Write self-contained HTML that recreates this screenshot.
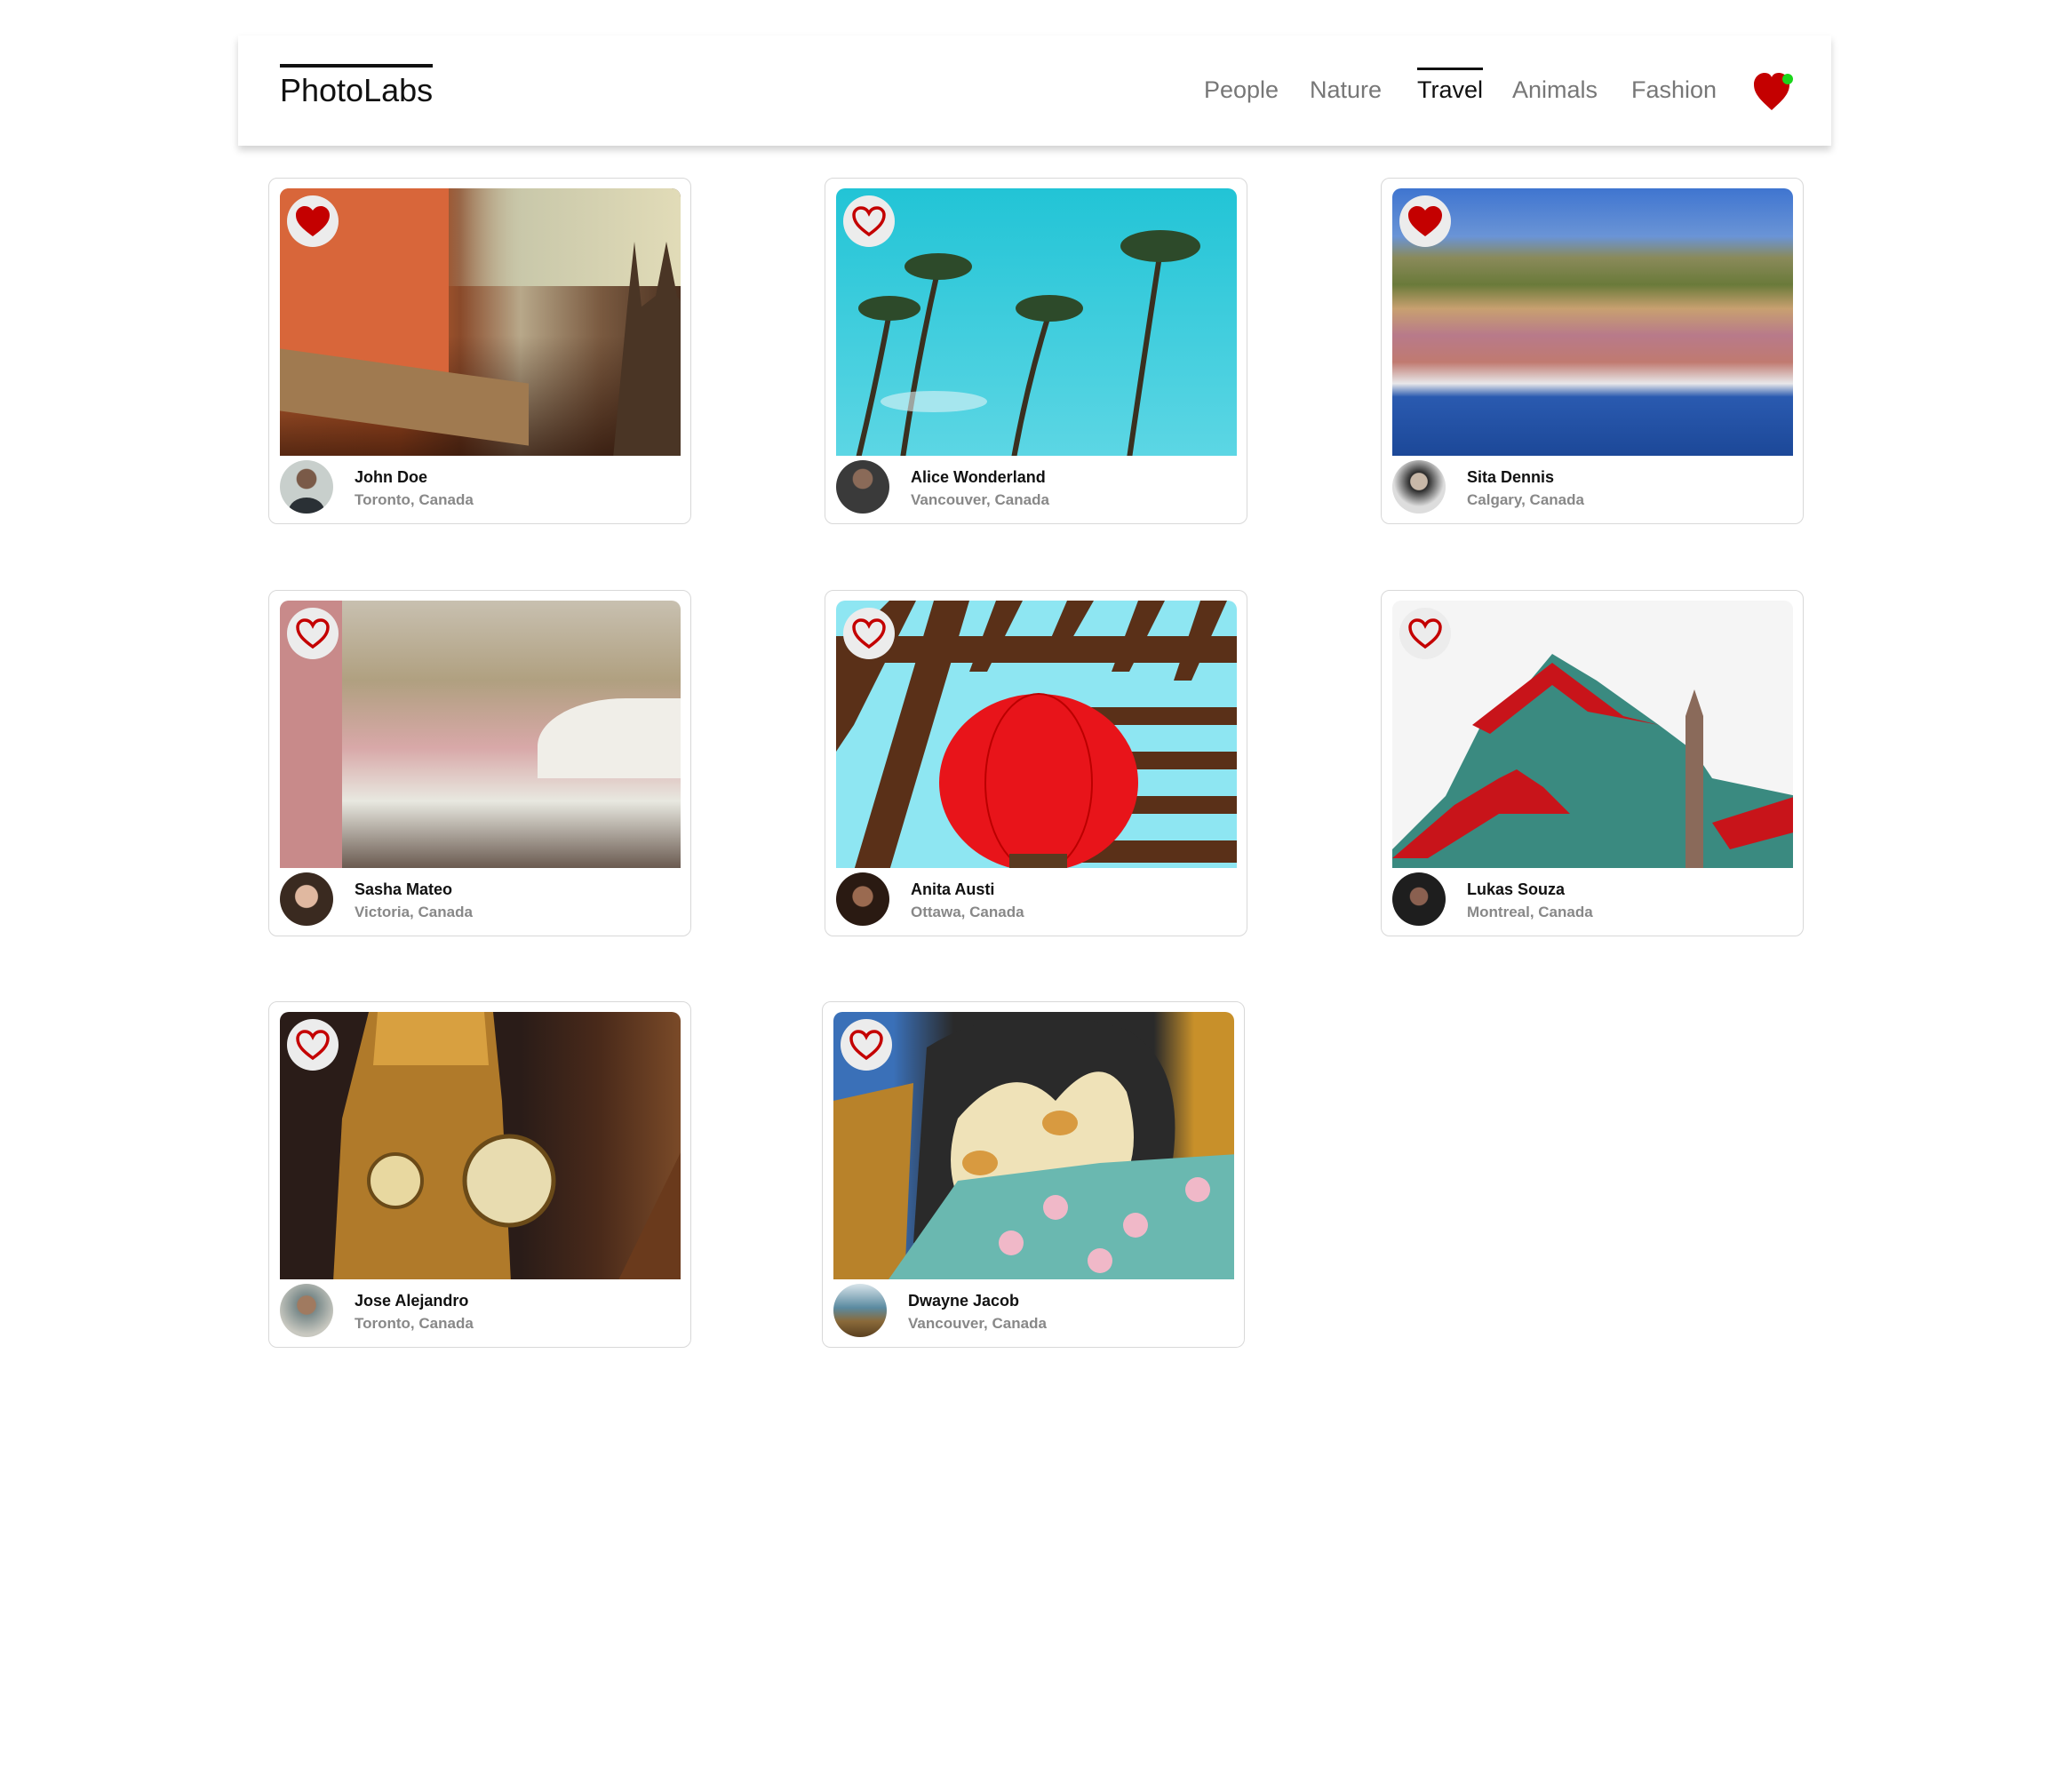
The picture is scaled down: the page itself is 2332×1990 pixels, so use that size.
<!DOCTYPE html>
<html><head><meta charset="utf-8"><style>
*{margin:0;padding:0;box-sizing:border-box}
body{width:2332px;height:1990px;background:#fff;font-family:"Liberation Sans",sans-serif;position:relative;overflow:hidden}
.nav{position:absolute;left:268px;top:40px;width:1793px;height:124px;background:#fff;box-shadow:0 5px 8px rgba(0,0,0,.18)}
.logo{position:absolute;left:47px;top:32px;font-size:36px;color:#111;border-top:4px solid #111;padding-top:6px;line-height:40px}
.nl{position:absolute;top:44px;font-size:27px;color:#777;line-height:34px}
.nl.a{color:#111}
.nl.a:before{content:"";position:absolute;left:0;right:0;top:-8px;border-top:3px solid #111}
.card{position:absolute;width:476px;height:390px;border:1.5px solid #d8d8d8;border-radius:10px;background:#fff}
.img{position:absolute;left:12px;top:11px;width:451px;height:301px;border-radius:10px 10px 0 0;overflow:hidden}
.fav{position:absolute;left:8px;top:8px;width:58px;height:58px;border-radius:50%;background:#ececec;display:flex;align-items:center;justify-content:center}
.av{position:absolute;left:12px;top:317px;width:60px;height:60px;border-radius:50%;overflow:hidden}
.nm{position:absolute;left:96px;top:326px;font-size:18px;font-weight:bold;color:#111}
.lc{position:absolute;left:96px;top:352px;font-size:17px;font-weight:bold;color:#888}
</style></head><body>
<div class="nav">
<div class="logo">PhotoLabs</div>
<div class="nl" style="left:1087px">People</div>
<div class="nl" style="left:1206px">Nature</div>
<div class="nl a" style="left:1327px">Travel</div>
<div class="nl" style="left:1434px">Animals</div>
<div class="nl" style="left:1568px">Fashion</div>
<svg style="position:absolute;left:1704px;top:40px" width="50" height="46" viewBox="0 0 50 46"><path d="M22 44C10 33 2 26 2 15 2 7 8 2 14 2c4 0 7 2 8 5 1-3 4-5 8-5 6 0 12 5 12 13 0 11-8 18-20 29z" fill="#c40000"/><circle cx="40" cy="9" r="6" fill="#1bd61b"/></svg>
</div>

<!-- Row1 -->
<div class="card" style="left:302px;top:200px">
<div class="img" style="background:linear-gradient(180deg,rgba(0,0,0,0) 55%,rgba(40,15,5,.75) 100%),linear-gradient(90deg,#e2733a 0%,#d9652e 30%,#8a4a2a 45%,#b8a88a 60%,#7a5a40 80%,#4a3020 100%)">
<div style="position:absolute;left:0;top:0;width:455px;height:110px;background:linear-gradient(90deg,rgba(0,0,0,0) 40%,#c9c8aa 60%,#e2dcb8 100%)"></div>
<div style="position:absolute;left:0;top:0;width:190px;height:240px;background:#d8663a"></div>
<div style="position:absolute;left:0;top:200px;width:280px;height:70px;background:#a07a50;transform:skewY(8deg)"></div>
<div style="position:absolute;left:375px;top:60px;width:80px;height:244px;background:#4a3525;clip-path:polygon(20% 30%,30% 0,40% 30%,60% 25%,75% 0,90% 25%,100% 30%,100% 100%,0 100%)"></div>
<div class="fav"><svg width="42" height="38" viewBox="0 0 42 38"><path d="M21 36C9 27 2 21 2 12 2 6 7 2 12 2c4 0 7 2 9 5 2-3 5-5 9-5 5 0 10 4 10 10 0 9-7 15-19 24z" fill="#c40000"/></svg></div></div>
<div class="av" style="background:radial-gradient(circle at 50% 35%,#7a5a48 0 22%,#c8cfcc 24%);"><div style="position:absolute;left:10px;top:42px;width:40px;height:30px;border-radius:50%;background:#2a3035"></div></div>
<div class="nm">John Doe</div><div class="lc">Toronto, Canada</div></div>

<div class="card" style="left:928px;top:200px">
<div class="img" style="background:linear-gradient(180deg,#22c4d6,#5cd6e4)">
<svg width="455" height="304" style="position:absolute;left:0;top:0"><g stroke="#3a3020" stroke-width="6" fill="none"><path d="M25 304Q45 220 60 140"/><path d="M75 304Q90 200 115 90"/><path d="M200 304Q215 220 240 140"/><path d="M330 304Q345 200 365 70"/></g><g fill="#2d4a2a"><ellipse cx="60" cy="135" rx="35" ry="14"/><ellipse cx="115" cy="88" rx="38" ry="15"/><ellipse cx="240" cy="135" rx="38" ry="15"/><ellipse cx="365" cy="65" rx="45" ry="18"/></g><ellipse cx="110" cy="240" rx="60" ry="12" fill="#e0f4f6" opacity=".6"/></svg>
<div class="fav"><svg width="42" height="38" viewBox="0 0 42 38"><path d="M21 34C10 26 4 20 4 12 4 7 8 4 12 4c4 0 7 2 9 6 2-4 5-6 9-6 4 0 8 3 8 8 0 8-6 14-17 22z" fill="none" stroke="#c40000" stroke-width="3.5"/></svg></div></div>
<div class="av" style="background:radial-gradient(circle at 50% 35%,#8a6a58 0 22%,#3a3a3a 24%)"></div>
<div class="nm">Alice Wonderland</div><div class="lc">Vancouver, Canada</div></div>

<div class="card" style="left:1554px;top:200px">
<div class="img" style="background:linear-gradient(180deg,#3f75d0 0%,#6a94d6 18%,#8a8a5a 26%,#6a7a3a 36%,#c8a070 45%,#b87a8a 55%,#c07a70 65%,#e8e8ea 73%,#2a5ab0 78%,#1c4898 100%)">
<div class="fav"><svg width="42" height="38" viewBox="0 0 42 38"><path d="M21 36C9 27 2 21 2 12 2 6 7 2 12 2c4 0 7 2 9 5 2-3 5-5 9-5 5 0 10 4 10 10 0 9-7 15-19 24z" fill="#c40000"/></svg></div></div>
<div class="av" style="background:radial-gradient(circle at 50% 40%,#c8b8a8 0 20%,#2a2a2a 22%,#ddd 60%)"></div>
<div class="nm">Sita Dennis</div><div class="lc">Calgary, Canada</div></div>

<!-- Row2 -->
<div class="card" style="left:302px;top:664px">
<div class="img" style="background:linear-gradient(180deg,#c8c0b0 0%,#b0a080 30%,#d8a8a8 55%,#e8e8e0 75%,#6a5a50 100%)">
<div style="position:absolute;left:0;top:0;width:70px;height:304px;background:#c88a8a"></div>
<div style="position:absolute;left:290px;top:110px;width:165px;height:90px;background:#f0eee8;border-radius:60% 0 0 0"></div>
<div class="fav"><svg width="42" height="38" viewBox="0 0 42 38"><path d="M21 34C10 26 4 20 4 12 4 7 8 4 12 4c4 0 7 2 9 6 2-4 5-6 9-6 4 0 8 3 8 8 0 8-6 14-17 22z" fill="none" stroke="#c40000" stroke-width="3.5"/></svg></div></div>
<div class="av" style="background:radial-gradient(circle at 50% 45%,#e0b8a0 0 28%,#3a2a20 30%)"></div>
<div class="nm">Sasha Mateo</div><div class="lc">Victoria, Canada</div></div>

<div class="card" style="left:928px;top:664px">
<div class="img" style="background:#8ee6f2">
<svg width="455" height="304" style="position:absolute;left:0;top:0"><g fill="#5a3018"><polygon points="0,60 60,0 90,0 20,140 0,170"/><polygon points="20,304 110,0 150,0 60,304"/><polygon points="180,0 210,0 170,80 150,80"/><polygon points="260,0 290,0 250,70 230,70"/><polygon points="340,0 370,0 330,80 310,80"/><polygon points="410,0 440,0 400,90 380,90"/><rect x="0" y="40" width="455" height="30"/><rect x="200" y="120" width="255" height="20"/><rect x="200" y="170" width="255" height="20"/><rect x="200" y="220" width="255" height="20"/><rect x="200" y="270" width="255" height="25"/></g><ellipse cx="228" cy="205" rx="112" ry="100" fill="#e8141a"/><ellipse cx="228" cy="205" rx="60" ry="100" fill="none" stroke="#b00" stroke-width="2"/><rect x="195" y="285" width="65" height="19" fill="#5a3a20"/></svg>
<div class="fav"><svg width="42" height="38" viewBox="0 0 42 38"><path d="M21 34C10 26 4 20 4 12 4 7 8 4 12 4c4 0 7 2 9 6 2-4 5-6 9-6 4 0 8 3 8 8 0 8-6 14-17 22z" fill="none" stroke="#c40000" stroke-width="3.5"/></svg></div></div>
<div class="av" style="background:radial-gradient(circle at 50% 45%,#9a6a50 0 25%,#2a1a12 27%)"></div>
<div class="nm">Anita Austi</div><div class="lc">Ottawa, Canada</div></div>

<div class="card" style="left:1554px;top:664px">
<div class="img" style="background:#f5f5f5">
<svg width="455" height="304" style="position:absolute;left:0;top:0"><polygon points="0,280 60,220 100,140 130,120 180,60 230,90 300,140 340,170 360,200 455,220 455,304 0,304" fill="#3a8a80"/><polygon points="90,140 180,70 260,130 300,140 220,125 180,95 110,150" fill="#c8141a"/><polygon points="0,290 70,230 120,200 140,190 170,210 200,240 120,240 40,290" fill="#c8141a"/><polygon points="330,130 340,100 350,130 350,304 330,304" fill="#8a6a5a"/><polygon points="360,250 455,220 455,260 380,280" fill="#c8141a"/></svg>
<div class="fav"><svg width="42" height="38" viewBox="0 0 42 38"><path d="M21 34C10 26 4 20 4 12 4 7 8 4 12 4c4 0 7 2 9 6 2-4 5-6 9-6 4 0 8 3 8 8 0 8-6 14-17 22z" fill="none" stroke="#c40000" stroke-width="3.5"/></svg></div></div>
<div class="av" style="background:radial-gradient(circle at 50% 45%,#8a6050 0 22%,#1e1e1e 24%)"></div>
<div class="nm">Lukas Souza</div><div class="lc">Montreal, Canada</div></div>

<!-- Row3 -->
<div class="card" style="left:302px;top:1127px">
<div class="img" style="background:linear-gradient(90deg,#2a1c18 0%,#2a1c18 60%,#4a2a1a 80%,#7a4a28 100%)">
<svg width="455" height="304" style="position:absolute;left:0;top:0"><polygon points="100,0 240,0 250,100 260,304 60,304 70,120" fill="#b07a2a"/><polygon points="110,0 230,0 235,60 105,60" fill="#d8a040"/><circle cx="130" cy="190" r="30" fill="#e8d8a0" stroke="#6a4a18" stroke-width="4"/><circle cx="258" cy="190" r="50" fill="#e8dcb0" stroke="#6a4a18" stroke-width="5"/><polygon points="380,304 455,150 455,304" fill="#6a3a1c"/></svg>
<div class="fav"><svg width="42" height="38" viewBox="0 0 42 38"><path d="M21 34C10 26 4 20 4 12 4 7 8 4 12 4c4 0 7 2 9 6 2-4 5-6 9-6 4 0 8 3 8 8 0 8-6 14-17 22z" fill="none" stroke="#c40000" stroke-width="3.5"/></svg></div></div>
<div class="av" style="background:radial-gradient(circle at 50% 40%,#a07a60 0 22%,#7a8a8a 24%,#c8c8c0 70%)"></div>
<div class="nm">Jose Alejandro</div><div class="lc">Toronto, Canada</div></div>

<div class="card" style="left:925px;top:1127px">
<div class="img" style="background:linear-gradient(90deg,#3a70b8 0%,#3a70b8 15%,#2a2a2a 30%,#2a2a2a 80%,#c8902a 90%)">
<svg width="455" height="304" style="position:absolute;left:0;top:0"><polygon points="0,100 90,80 80,304 0,304" fill="#b8822a"/><path d="M105 40 Q200 -20 330 20 Q400 60 380 180 L330 240 L90 260 Z" fill="#2a2a2a"/><path d="M140 120 Q200 50 250 100 Q300 40 330 90 Q350 160 320 200 L150 230 Q120 180 140 120Z" fill="#efe2b8"/><polygon points="60,304 140,190 300,170 455,160 455,304" fill="#6ab8b0"/><circle cx="200" cy="260" r="14" fill="#f0b8c8"/><circle cx="250" cy="220" r="14" fill="#f0b8c8"/><circle cx="340" cy="240" r="14" fill="#f0b8c8"/><circle cx="410" cy="200" r="14" fill="#f0b8c8"/><circle cx="300" cy="280" r="14" fill="#f0b8c8"/><ellipse cx="165" cy="170" rx="20" ry="14" fill="#d89a40"/><ellipse cx="255" cy="125" rx="20" ry="14" fill="#d89a40"/></svg>
<div class="fav"><svg width="42" height="38" viewBox="0 0 42 38"><path d="M21 34C10 26 4 20 4 12 4 7 8 4 12 4c4 0 7 2 9 6 2-4 5-6 9-6 4 0 8 3 8 8 0 8-6 14-17 22z" fill="none" stroke="#c40000" stroke-width="3.5"/></svg></div></div>
<div class="av" style="background:linear-gradient(180deg,#d8e4ea 0%,#5a8aa0 45%,#8a6a3a 70%,#5a4020 100%)"></div>
<div class="nm">Dwayne Jacob</div><div class="lc">Vancouver, Canada</div></div>
</body></html>
